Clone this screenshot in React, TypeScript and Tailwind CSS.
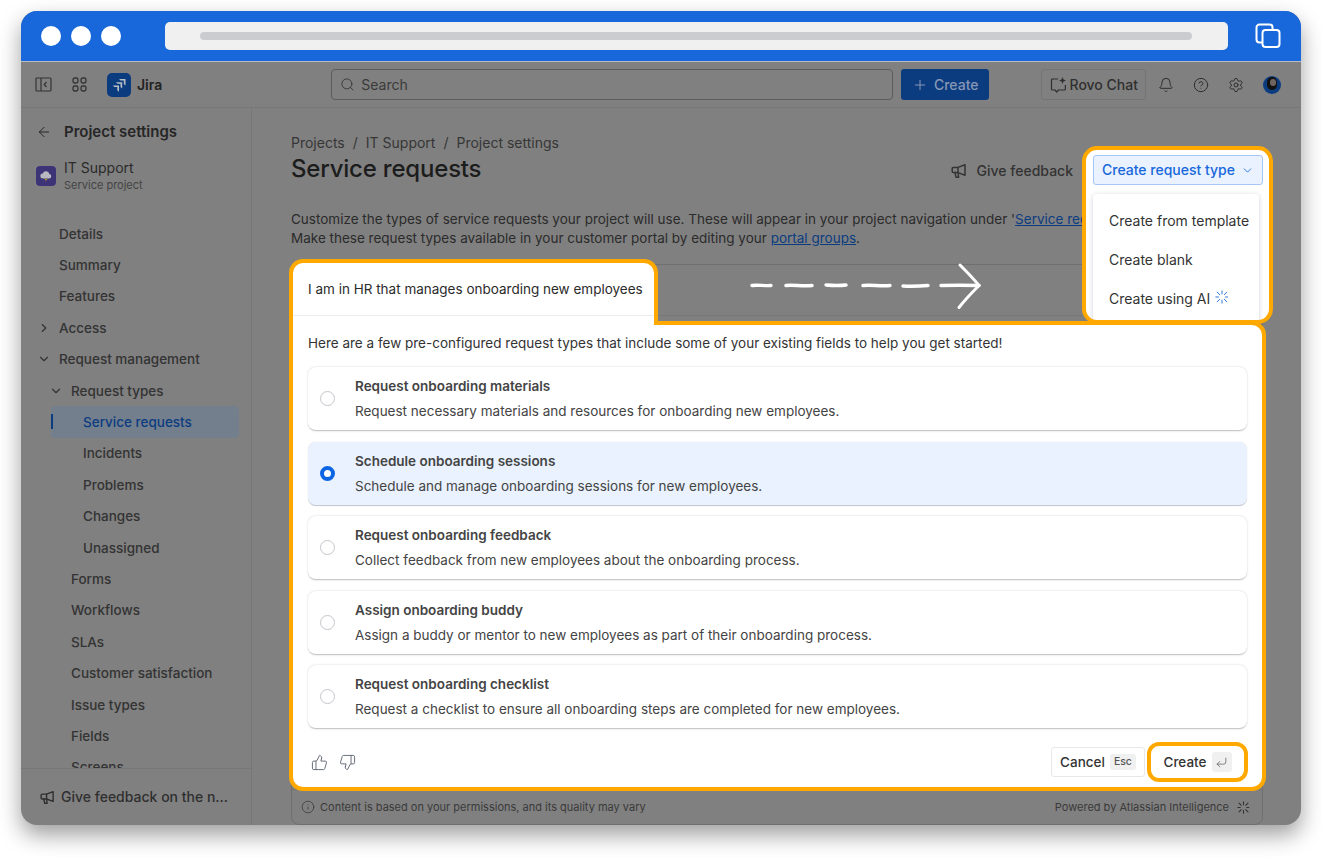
import React from "react";
import {
  ArrowLeft, Bell, ChevronDown, ChevronRight, CircleHelp, CornerDownLeft, Info, Plus, Search, Settings, ThumbsDown, ThumbsUp,
} from "lucide-react";

const Sparkle = ({ size = 14, color = "currentColor", w = 1.3 }: { size?: number; color?: string; w?: number }) => (
  <svg width={size} height={size} viewBox="0 0 16 16" fill="none" stroke={color} strokeWidth={w} strokeLinecap="round">
    <path d="M8 1v3.5M8 11.5V15M1 8h0M2.5 2.5l2.8 2.8M10.7 10.7l2.8 2.8M13.5 2.5l-2.8 2.8M5.3 10.7l-2.8 2.8M1.5 8H4M12 8h2.5" />
  </svg>
);

const Megaphone = ({ size = 16 }: { size?: number }) => (
  <svg width={size} height={size} viewBox="0 0 16 16" fill="none" stroke="currentColor" strokeWidth={1.5} strokeLinejoin="round" strokeLinecap="round">
    <path d="M14 1.8v10.4L7 9.6H2.2a1 1 0 0 1-1-1V5.4a1 1 0 0 1 1-1H7z" />
    <path d="M4 9.6 5 14.2h2.6L7 9.6M7 4.4v5.2" />
  </svg>
);

const Row = ({ indent, children, chevron }: { indent: string; children: React.ReactNode; chevron?: "right" | "down" }) => (
  <div className={`relative flex h-[31.4px] shrink-0 items-center ${indent}`}>
    {chevron === "right" && <ChevronRight size={14} className="absolute left-[-22px] text-[#333]" />}
    {chevron === "down" && <ChevronDown size={14} className="absolute left-[-22px] text-[#333]" />}
    {children}
  </div>
);

const options = [
  ["Request onboarding materials", "Request necessary materials and resources for onboarding new employees."],
  ["Schedule onboarding sessions", "Schedule and manage onboarding sessions for new employees."],
  ["Request onboarding feedback", "Collect feedback from new employees about the onboarding process."],
  ["Assign onboarding buddy", "Assign a buddy or mentor to new employees as part of their onboarding process."],
  ["Request onboarding checklist", "Request a checklist to ensure all onboarding steps are completed for new employees."],
];

export default function App() {
  return (
    <div className="h-[857px] w-[1322px] overflow-hidden bg-white pl-[21px] pt-[11px] text-[14px] leading-[20px] font-['Inter','Liberation_Sans',sans-serif]">
      <div className="relative flex h-[814px] w-[1280px] flex-col overflow-hidden rounded-[16px] bg-[#808080] shadow-[0_10px_22px_rgba(0,0,0,0.38)]">
        {/* browser bar */}
        <div className="flex h-[51px] shrink-0 items-center border-b border-[#b9bcc2] bg-[#1868db] pl-[20px]">
          <div className="flex gap-[10px]">
            <div className="h-[20px] w-[20px] rounded-full bg-white" />
            <div className="h-[20px] w-[20px] rounded-full bg-white" />
            <div className="h-[20px] w-[20px] rounded-full bg-white" />
          </div>
          <div className="ml-[44px] flex h-[28px] w-[1063px] items-center rounded-[5px] bg-[#f0f0f1] pl-[35px]">
            <div className="h-[8px] w-[992px] rounded-full bg-[#cbccd0]" />
          </div>
          <svg className="ml-[27px]" width="26" height="26" viewBox="0 0 26 26" fill="none" stroke="white" strokeWidth="2">
            <rect x="7.5" y="7" width="17" height="17" rx="3" />
            <path d="M7 19.5H4.5a3 3 0 0 1-3-3V4.5a3 3 0 0 1 3-3h10a3 3 0 0 1 3 3V7" />
          </svg>
        </div>

        {/* app top bar */}
        <div className="flex h-[46px] shrink-0 items-center border-b border-[#777] pl-[14px] text-[#2b2b2b]">
          <svg width="17" height="15" viewBox="0 0 17 15" fill="none" stroke="#333" strokeWidth="1.2">
            <rect x="1" y="1" width="15" height="13" rx="1" />
            <path d="M6 1v13M11.5 5l-2.3 2.5 2.3 2.5" />
          </svg>
          <svg className="ml-[20px]" width="15" height="15" viewBox="0 0 15 15" fill="none" stroke="#333" strokeWidth="1.3">
            <rect x="1" y="1" width="5" height="5" rx="1.8" />
            <rect x="9" y="1" width="5" height="5" rx="1.8" />
            <rect x="1" y="9" width="5" height="5" rx="1.8" />
            <rect x="9" y="9" width="5" height="5" rx="1.8" />
          </svg>
          <div className="ml-[20px] flex h-[24px] w-[24px] items-center justify-center rounded-[5px] bg-[#0c3c80]">
            <svg width="16" height="16" viewBox="0 0 16 16" fill="#b9bdc4">
              <path d="M8 2h6.5v6.5L12.8 7V3.6H9.6z" />
              <path d="M5 5.2h6.2v6.2l-1.7-1.5V6.8H6.5z" />
              <path d="M1.8 8.5H8v6.2l-1.7-1.5V10H3.3z" />
            </svg>
          </div>
          <span className="ml-[6px] text-[14px] font-semibold text-[#222]">Jira</span>
          <div className="ml-[169px] flex h-[31px] w-[562px] items-center rounded-[4px] border border-[#5c5c5c] pl-[8px] text-[#3a3a3a]">
            <Search size={15} strokeWidth={1.5} />
            <span className="ml-[6px]">Search</span>
          </div>
          <div className="ml-[8px] flex h-[31px] w-[88px] items-center justify-center gap-[6px] rounded-[3px] bg-[#0c3c80] font-medium text-[#8597b5]">
            <Plus size={16} strokeWidth={1.5} />
            <span>Create</span>
          </div>
          <div className="ml-[52px] flex h-[31px] w-[105px] items-center justify-center gap-[3px] rounded-[3px] border border-[#747474] font-medium text-[#2f2f2f]">
            <svg width="17" height="17" viewBox="0 0 17 17" fill="none" stroke="#2f2f2f" strokeWidth="1.2" strokeLinejoin="round">
              <path d="M8 3H2.5a1 1 0 0 0-1 1v9a1 1 0 0 0 1 1H5l1.7 2L8.4 14h6a1 1 0 0 0 1-1V9" />
              <path d="M12.5 1l1 2.5 2.5 1-2.5 1-1 2.5-1-2.5-2.5-1 2.5-1z" fill="#2f2f2f" stroke="none" />
            </svg>
            <span>Rovo Chat</span>
          </div>
          <Bell size={16} strokeWidth={1.5} className="ml-[12px] text-[#2f2f2f]" />
          <CircleHelp size={16} strokeWidth={1.5} className="ml-[19px] text-[#2f2f2f]" />
          <Settings size={16} strokeWidth={1.5} className="ml-[19px] text-[#2f2f2f]" />
          <div className="relative ml-[19px] h-[18px] w-[18px] overflow-hidden rounded-full bg-[#0c3c80]">
            <div className="absolute left-[4px] top-[1px] h-[13px] w-[10px] rounded-full bg-[#111]" />
            <div className="absolute left-[7px] top-[3px] h-[7px] w-[6px] rounded-full bg-[#6f6560]" />
          </div>
        </div>

        <div className="flex min-h-0 flex-1">
          {/* sidebar */}
          <aside className="flex w-[231px] shrink-0 flex-col border-r border-[#777]">
            <div className="mt-[14px] flex h-[20px] items-center pl-[15px] text-[#262626]">
              <ArrowLeft size={16} strokeWidth={1.5} />
              <span className="ml-[12px] text-[15px] font-semibold">Project settings</span>
            </div>
            <div className="mt-[17px] flex items-center pl-[15px]">
              <div className="flex h-[20px] w-[20px] items-center justify-center rounded-[4px] bg-[#3d3478]">
                <svg width="14" height="14" viewBox="0 0 14 14">
                  <path d="M4 9.5a2.5 2.5 0 0 1-.3-5A3.5 3.5 0 0 1 10.4 5 2.3 2.3 0 0 1 10.5 9.5z" fill="#b8b8c0" />
                  <path d="M7.5 8.5 5.5 11h1.5l-1 2 2.5-3H7z" fill="#b89a20" />
                </svg>
              </div>
              <div className="ml-[8px]">
                <div className="h-[18px] text-[14px] leading-[18px] text-[#2b2b2b]">IT Support</div>
                <div className="h-[16px] text-[11px] leading-[16px] text-[#444]">Service project</div>
              </div>
            </div>
            <div className="mt-[25px] flex min-h-0 flex-1 flex-col overflow-hidden text-[13.5px] font-medium text-[#333]">
              <Row indent="ml-[38px]">Details</Row>
              <Row indent="ml-[38px]">Summary</Row>
              <Row indent="ml-[38px]">Features</Row>
              <Row indent="ml-[38px]" chevron="right">Access</Row>
              <Row indent="ml-[38px]" chevron="down">Request management</Row>
              <Row indent="ml-[50px]" chevron="down">Request types</Row>
              <div className="relative ml-[30px] flex h-[31.4px] w-[188px] shrink-0 items-center rounded-[4px] bg-[#747f8e] pl-[32px] text-[#0c3c80]">
                <div className="absolute left-0 top-[8px] h-[15px] w-[2px] bg-[#0c3c80]" />
                Service requests
              </div>
              <Row indent="ml-[62px]">Incidents</Row>
              <Row indent="ml-[62px]">Problems</Row>
              <Row indent="ml-[62px]">Changes</Row>
              <Row indent="ml-[62px]">Unassigned</Row>
              <Row indent="ml-[50px]">Forms</Row>
              <Row indent="ml-[50px]">Workflows</Row>
              <Row indent="ml-[50px]">SLAs</Row>
              <Row indent="ml-[50px]">Customer satisfaction</Row>
              <Row indent="ml-[50px]">Issue types</Row>
              <Row indent="ml-[50px]">Fields</Row>
              <Row indent="ml-[50px]">Screens</Row>
            </div>
            <div className="flex h-[57px] shrink-0 items-center border-t border-[#777] pb-[12px] pl-[19px] pt-[12px] text-[#2f2f2f]">
              <Megaphone size={15} />
              <span className="ml-[6px] text-[14px] font-medium">Give feedback on the n...</span>
            </div>
          </aside>

          {/* page content */}
          <main className="flex min-w-0 flex-1 flex-col pl-[39px] pr-[38px] pt-[25px] text-[#2b2b2b]">
            <div className="flex h-[20px] items-center gap-[8px] text-[14px] text-[#363636]">
              <span>Projects</span><span>/</span><span>IT Support</span><span>/</span><span>Project settings</span>
            </div>
            <div className="flex h-[32px] items-center">
              <h1 className="text-[24px] font-medium leading-[32px] tracking-[-0.2px] text-[#1c1c1c]">Service requests</h1>
              <div className="ml-auto mr-[190px] mt-[4px] flex items-center gap-[10px] font-medium text-[#333]">
                <Megaphone size={16} />
                <span>Give feedback</span>
              </div>
            </div>
            <div className="mt-[25px] text-[13.5px] leading-[19px] whitespace-nowrap">
              <div>Customize the types of service requests your project will use. These will appear in your project navigation under '<span className="text-[#0c3c80] underline">Service requests</span>'.</div>
              <div>Make these request types available in your customer portal by editing your <span className="text-[#0c3c80] underline">portal groups</span>.</div>
            </div>
            <div className="mt-[16px] flex flex-1 flex-col rounded-[8px] border border-[#6f6f6f]">
              <div className="h-[51px] border-b border-[#777]" />
              <div className="flex-1" />
              <div className="flex h-[35px] items-center justify-between border-t border-[#777] pl-[9px] pr-[12px] text-[11px] text-[#3a3a3a]">
                <div className="flex items-center gap-[5px]"><Info size={14} strokeWidth={1.3} /><span>Content is based on your permissions, and its quality may vary</span></div>
                <div className="flex items-center gap-[8px]"><span>Powered by Atlassian Intelligence</span><Sparkle size={13} color="#333" /></div>
              </div>
            </div>
          </main>
        </div>

        {/* hand-drawn arrow */}
        <svg className="absolute left-[725px] top-[250px]" width="240" height="52" viewBox="0 0 240 52" fill="none" stroke="white" strokeLinecap="round">
          <path strokeWidth="3.4" d="M6 24.5c6-1 12 .6 19 0M40 24.5c8-.8 16 1 26 0M80 24c6 .5 12 1 20 0M117 24.5c8-1 16 .8 27 0M157 25c7 .4 14 .4 25-.5M195 24.5c12-.4 24-.4 38 0" />
          <path strokeWidth="3" d="M214 4c7 7 13 13 19 20.5-6 6-13 13-20 22" />
        </svg>

        {/* create request type menu */}
        <div className="absolute left-[1061px] top-[135px] h-[178px] w-[191px] overflow-hidden rounded-[15px] border-4 border-[#ffa800] bg-white pl-[7px] pt-[5px]">
          <div className="flex h-[30px] w-[170px] items-center justify-center gap-[6px] rounded-[3px] border border-[#a8c6f5] bg-[#e9f2fe] font-medium text-[#1868db]">
            <span>Create request type</span>
            <ChevronDown size={13} strokeWidth={1.6} />
          </div>
          <div className="mt-[9px] h-[140px] w-[166px] rounded-[4px] pl-[16px] pt-[7px] text-[#333] shadow-[0_1px_5px_rgba(9,30,66,0.2)]">
            <div className="flex h-[39px] items-center">Create from template</div>
            <div className="flex h-[39px] items-center">Create blank</div>
            <div className="flex h-[39px] items-center gap-[5px]">Create using AI <span className="-mt-[4px]"><Sparkle size={14} color="#2b77e0" w={1.1} /></span></div>
          </div>
        </div>

        {/* AI dialog */}
        <div className="absolute left-[268px] top-[248px] w-[977px]">
          <div className="relative z-10 -mb-[4px] h-[66px] w-[369px] rounded-t-[14px] border-x-4 border-t-4 border-[#ffa800] bg-white">
            <div className="flex h-[53px] items-center border-b border-[#ececec] pl-[15px] text-[13.5px] text-[#2b2b2b]">I am in HR that manages onboarding new employees</div>
          </div>
          <div className="h-[470px] rounded-b-[14px] rounded-tr-[14px] border-4 border-[#ffa800] bg-white px-[15px] pt-[8px] text-[13.5px]">
            <div className="flex h-[20px] items-center text-[#333]">Here are a few pre-configured request types that include some of your existing fields to help you get started!</div>
            <div className="mt-[14px] flex flex-col gap-[10.6px]">
              {options.map(([title, desc], i) => {
                const sel = i === 1;
                return (
                  <div key={title} className={`flex h-[64px] items-center rounded-[8px] border-b-[1.5px] pl-[12px] ${sel ? "border-b-[#c5cad2] bg-[#e9f2fe] shadow-[0_0_1px_rgba(9,30,66,0.2)]" : "border-b-[#c8c8c8] bg-white shadow-[0_0_2px_rgba(9,30,66,0.22)]"}`}>
                    {sel ? (
                      <div className="h-[15px] w-[15px] rounded-full border-[4px] border-[#0c66e4] bg-white" />
                    ) : (
                      <div className="h-[15px] w-[15px] rounded-full border border-[#c4c6cb] bg-white" />
                    )}
                    <div className="ml-[20px] text-[#444]">
                      <div className="h-[20px] font-semibold">{title}</div>
                      <div className="mt-[5px] h-[20px]">{desc}</div>
                    </div>
                  </div>
                );
              })}
            </div>
            <div className="mt-[14px] flex h-[38px] items-center">
              <ThumbsUp size={17} strokeWidth={1.3} className="ml-[3px] text-[#5d6470]" />
              <ThumbsDown size={17} strokeWidth={1.3} className="ml-[11px] text-[#5d6470]" />
              <div className="ml-auto flex h-[30px] w-[94px] items-center justify-center gap-[5px] rounded-[3px] border border-[#e8e8e8] font-medium text-[#333]">
                <span>Cancel</span>
                <span className="rounded-[3px] bg-[#f0f0f1] px-[4px] text-[10.5px] leading-[16px] text-[#555]">Esc</span>
              </div>
              <div className="ml-[2px] mr-[-1px] flex h-[40px] w-[101px] items-center justify-center gap-[5px] rounded-[12px] border-4 border-[#ffa800] bg-white font-medium text-[#333]">
                <span>Create</span>
                <span className="flex h-[20px] w-[20px] items-center justify-center rounded-[3px] bg-[#f0f0f1] text-[#555]"><CornerDownLeft size={13} strokeWidth={1.3} /></span>
              </div>
            </div>
          </div>
        </div>
      </div>
    </div>
  );
}
